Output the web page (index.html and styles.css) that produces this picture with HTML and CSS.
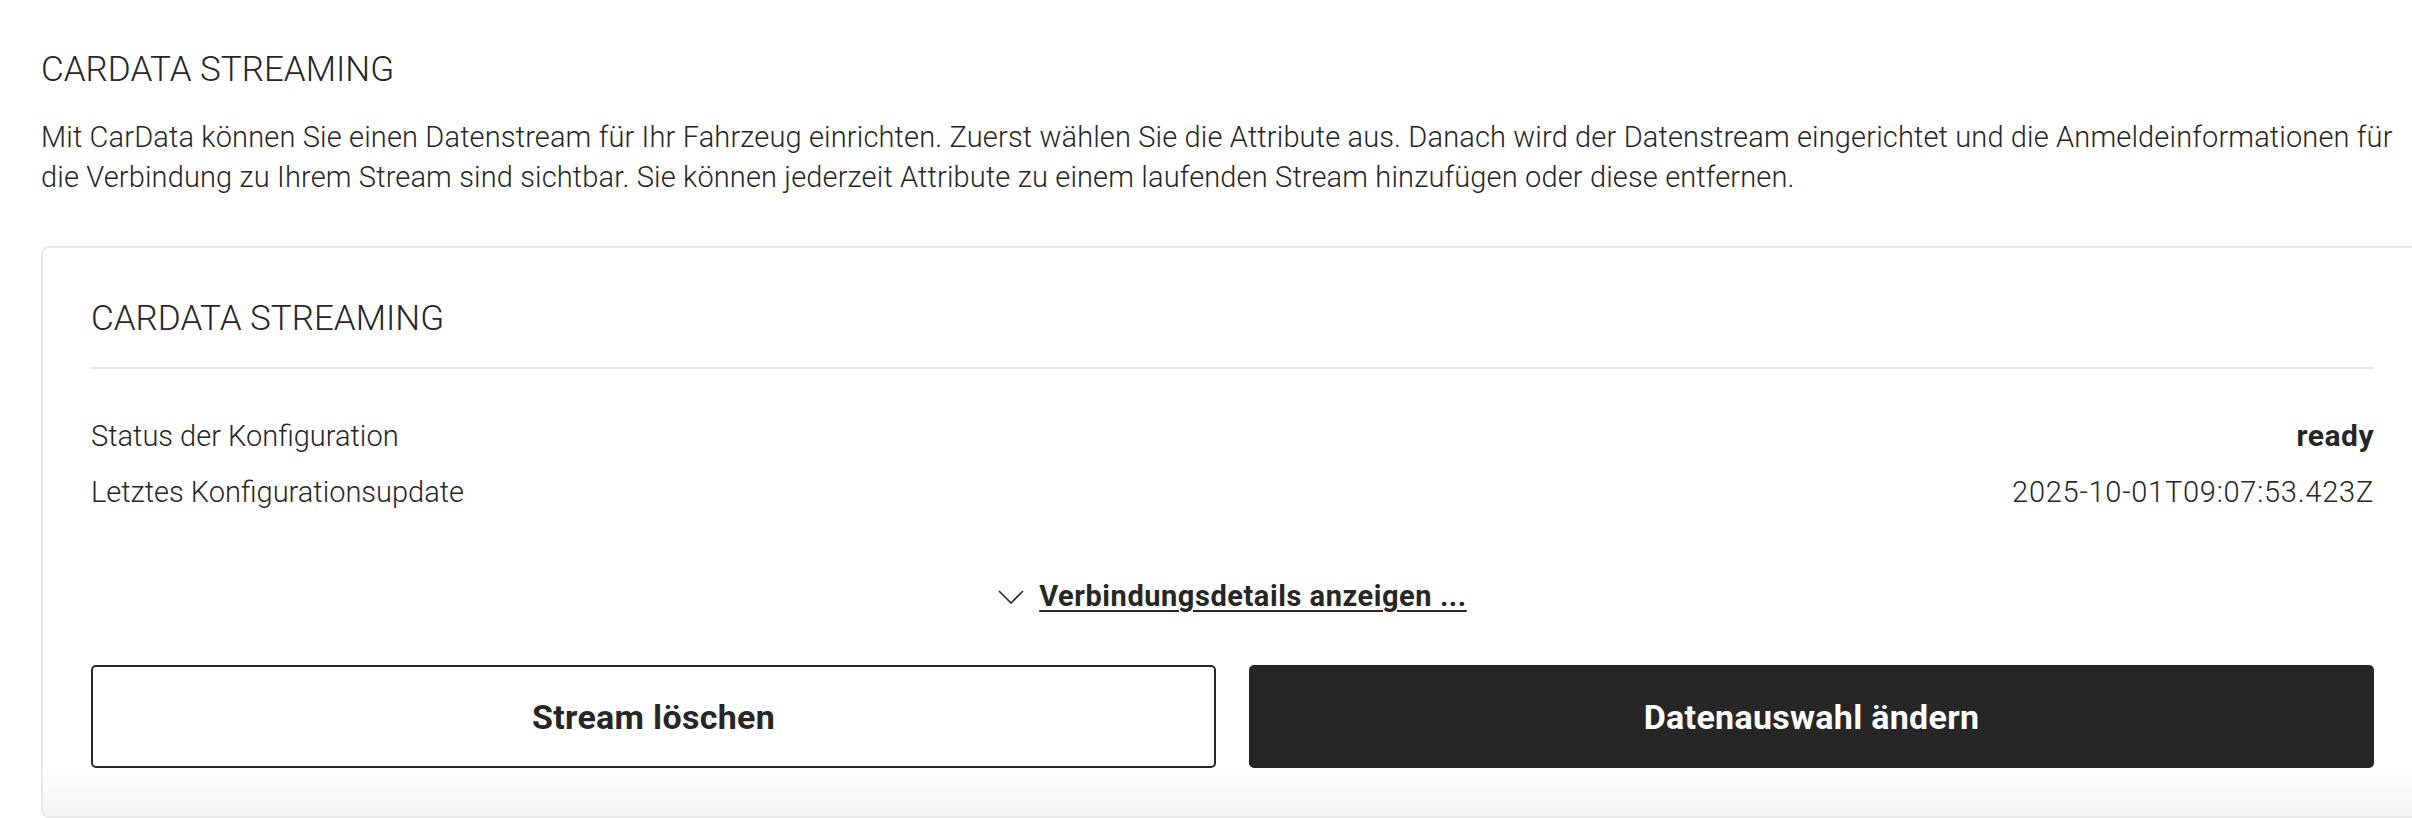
FILE: index.html
```html
<!DOCTYPE html>
<html lang="de">
<head>
<meta charset="utf-8">
<title>CarData Streaming</title>
<link rel="stylesheet" href="styles.css">
</head>
<body>
<main class="page">
  <h1 class="page-title">CARDATA STREAMING</h1>
  <p class="intro">Mit CarData können Sie einen Datenstream für Ihr Fahrzeug einrichten. Zuerst wählen Sie die Attribute aus. Danach wird der Datenstream eingerichtet und die Anmeldeinformationen für die Verbindung zu Ihrem Stream sind sichtbar. Sie können jederzeit Attribute zu einem laufenden Stream hinzufügen oder diese entfernen.</p>
  <section class="card">
    <h2 class="card-title">CARDATA STREAMING</h2>
    <dl class="info">
      <div class="info-row"><dt>Status der Konfiguration</dt><dd class="value-strong">ready</dd></div>
      <div class="info-row"><dt>Letztes Konfigurationsupdate</dt><dd class="value-date">2025-10-01T09:07:53.423Z</dd></div>
    </dl>
    <div class="toggle-wrap">
      <a class="toggle" href="#">
        <svg class="chevron" width="26" height="14" viewBox="0 0 26 14" aria-hidden="true"><path d="M1 1 L13 13 L25 1" fill="none" stroke="#262626" stroke-width="1.6"/></svg>
        <span class="toggle-text">Verbindungsdetails anzeigen ...</span>
      </a>
    </div>
    <div class="actions">
      <button class="btn btn-outline" type="button">Stream löschen</button>
      <button class="btn btn-solid" type="button">Datenauswahl ändern</button>
    </div>
  </section>
</main>
</body>
</html>
```

FILE: styles.css
```css
html, body {
  margin: 0;
  padding: 0;
  background: #ffffff;
  overflow: hidden;
}

body {
  font-family: "Roboto", "Liberation Sans", sans-serif;
  color: #262626;
}

.page {
  margin-left: 41px;
  width: 2383px;
  padding-top: 50px;
}

.page-title {
  margin: 0 0 27px;
  font-size: 35px;
  line-height: 40px;
  font-weight: 300;
}

.intro {
  max-width: 2375px;
  margin: 0 0 49px;
  font-size: 29px;
  line-height: 40px;
  font-weight: 300;
  letter-spacing: 0.14px;
}

.card {
  border: 2px solid #e8e8e8;
  border-radius: 8px;
  padding: 51px 48px 48px;
  background: linear-gradient(180deg, #ffffff calc(100% - 52px), #f4f4f4 100%);
}

.card-title {
  margin: 0;
  padding-bottom: 28px;
  border-bottom: 2px solid #e6e6e6;
  font-size: 35px;
  line-height: 40px;
  font-weight: 300;
}

.info {
  margin: 47px 0 0;
  display: flex;
  flex-direction: column;
  gap: 16px;
}

.info-row {
  display: flex;
  justify-content: space-between;
  align-items: baseline;
  font-size: 29px;
  line-height: 40px;
  font-weight: 300;
}

.info-row dt,
.info-row dd {
  margin: 0;
}

.value-strong {
  font-weight: 700;
  font-size: 30px;
  letter-spacing: 0.5px;
}

.value-date {
  letter-spacing: 0.75px;
}

.toggle-wrap {
  display: flex;
  justify-content: center;
  margin-top: 64px;
}

.toggle {
  display: flex;
  align-items: center;
  gap: 15px;
  color: #262626;
  text-decoration: none;
  font-size: 29px;
  line-height: 40px;
  font-weight: 700;
  letter-spacing: 0.55px;
}

.chevron {
  display: block;
  margin-top: 2px;
}

.toggle-text {
  text-decoration: underline;
  text-decoration-thickness: 2px;
  text-underline-offset: 4px;
}

.actions {
  display: grid;
  grid-template-columns: 1fr 1fr;
  gap: 33px;
  margin-top: 49px;
}

.btn {
  height: 103px;
  border-radius: 5px;
  font-family: "Roboto", "Liberation Sans", sans-serif;
  font-size: 34px;
  font-weight: 700;
  letter-spacing: 0.3px;
  cursor: pointer;
}

.btn-outline {
  background: #ffffff;
  color: #262626;
  border: 2px solid #262626;
}

.btn-solid {
  background: #262626;
  color: #ffffff;
  border: 2px solid #262626;
}
```
